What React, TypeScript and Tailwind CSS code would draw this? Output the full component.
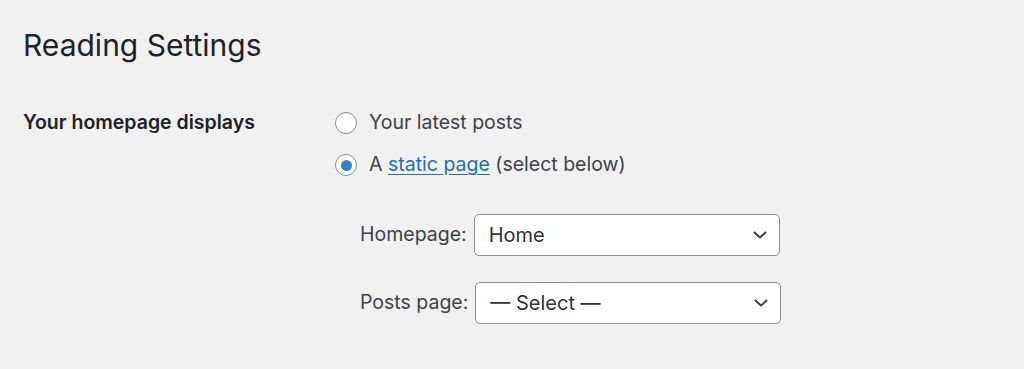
import { useState } from "react";

function Chevron() {
  return (
    <svg width="14" height="8" viewBox="0 0 14 8" fill="none" className="shrink-0">
      <path d="M1.5 1.5L7 6.5L12.5 1.5" stroke="#3c434a" strokeWidth="2" strokeLinecap="round" strokeLinejoin="round" />
    </svg>
  );
}

function Radio({ checked, onClick }: { checked: boolean; onClick: () => void }) {
  return (
    <button
      type="button"
      onClick={onClick}
      className="w-[22px] h-[22px] rounded-full border border-[#8c8f94] bg-white flex items-center justify-center shrink-0"
    >
      {checked && <span className="w-[11px] h-[11px] rounded-full bg-[#3582c4]" />}
    </button>
  );
}

function SelectBox({ value }: { value: string }) {
  return (
    <div className="w-[306px] h-[42px] rounded-[5px] border border-[#8c8f94] bg-white flex items-center justify-between pl-[14px] pr-[12px]">
      <span className="text-[20px] text-[#2c3338]">{value}</span>
      <Chevron />
    </div>
  );
}

export default function App() {
  const [choice, setChoice] = useState("page");

  return (
    <div
      className="w-[1024px] h-[369px] bg-[#f0f0f1] text-[#1d2327] pl-[23px] pt-[26px]"
      style={{ fontFamily: "Inter, 'Noto Sans', sans-serif" }}
    >
      <h1 className="text-[30px] leading-[38px] font-normal">Reading Settings</h1>

      <div className="flex mt-[46px]">
        <div className="w-[312px] text-[19.5px] font-semibold leading-[24px]">
          Your homepage displays
        </div>

        <div className="flex flex-col pt-[1px]">
          <label className="flex items-center gap-[12px] h-[24px]">
            <Radio checked={choice === "posts"} onClick={() => setChoice("posts")} />
            <span className="text-[19.5px] text-[#3c434a]">Your latest posts</span>
          </label>
          <label className="flex items-center gap-[12px] h-[24px] mt-[18px]">
            <Radio checked={choice === "page"} onClick={() => setChoice("page")} />
            <span className="text-[19.5px] text-[#3c434a]">
              A{" "}
              <a href="#" className="text-[#2271b1] underline underline-offset-[3px]">
                static page
              </a>{" "}
              (select below)
            </span>
          </label>

          <div className="flex flex-col gap-[26px] mt-[37px] ml-[25px]">
            <div className="flex items-center gap-[7px]">
              <span className="text-[19.5px] text-[#3c434a]">Homepage:</span>
              <SelectBox value="Home" />
            </div>
            <div className="flex items-center gap-[7px]">
              <span className="text-[19.5px] text-[#3c434a]">Posts page:</span>
              <SelectBox value="— Select —" />
            </div>
          </div>
        </div>
      </div>
    </div>
  );
}
